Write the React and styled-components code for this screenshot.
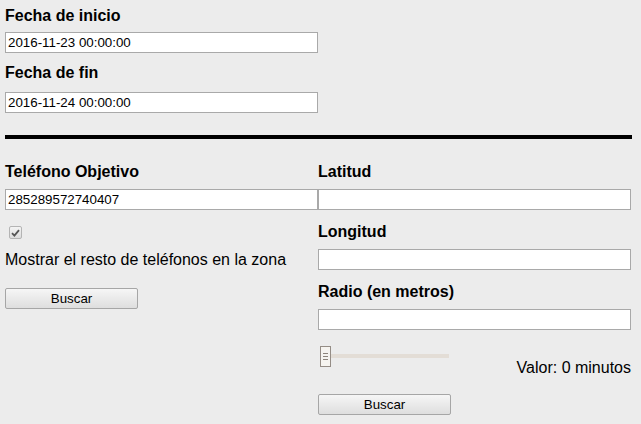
import React, { useState } from "react";
import styled, { createGlobalStyle } from "styled-components";

const GlobalStyle = createGlobalStyle`
  html, body {
    margin: 0;
    padding: 0;
    background: #ececec;
  }
  body {
    font-family: "Liberation Sans", Arial, sans-serif;
    color: #000;
  }
`;

const Page = styled.div`
  width: 626px;
  padding: 6px 0 0 5px;
`;

const Top = styled.div`
  width: 313px;
`;

const Label = styled.div`
  font-weight: bold;
  font-size: 16px;
  line-height: 20px;
  height: 20px;
  margin-top: ${p => p.$top || 0}px;
  margin-bottom: ${p => p.$gap || 7}px;
  white-space: nowrap;
`;

const Input = styled.input`
  display: block;
  box-sizing: border-box;
  width: 100%;
  height: 21px;
  margin: 0;
  padding: 1px 2px;
  border: 1px solid #a9a9a9;
  background: #fff;
  font-family: "Liberation Sans", Arial, sans-serif;
  font-size: 13.33px;
  color: #000;
  outline: none;
`;

const Rule = styled.div`
  height: 4px;
  background: #000;
  width: 627px;
  margin: 22px 0 23px;
`;

const Columns = styled.div`
  display: grid;
  grid-template-columns: 313px 313px;
`;

const Column = styled.div`
  display: flex;
  flex-direction: column;
`;

const Check = styled.span`
  box-sizing: border-box;
  display: flex;
  align-items: center;
  justify-content: center;
  width: 13px;
  height: 13px;
  margin: 16px 0 0 4px;
  border: 1px solid #b4b4b4;
  border-radius: 2px;
  background: linear-gradient(#f4f4f4, #dcdcdc);
`;

const Text = styled.div`
  font-size: 16px;
  line-height: 20px;
  white-space: nowrap;
  margin-top: ${p => p.$top || 0}px;
`;

const Button = styled.button`
  box-sizing: border-box;
  width: 133px;
  height: 21px;
  margin: ${p => p.$top}px 0 0 0;
  padding: 0;
  border: 1px solid #a6a6a6;
  border-radius: 2px;
  background: linear-gradient(#f6f6f6, #dedede);
  font-family: "Liberation Sans", Arial, sans-serif;
  font-size: 13.33px;
  color: #000;
  align-self: flex-start;
`;

const SliderRow = styled.div`
  display: flex;
  justify-content: space-between;
  align-items: flex-start;
  margin-top: 16px;
  height: 32px;
`;

const Track = styled.div`
  position: relative;
  width: 123px;
  height: 4px;
  margin: 8px 0 0 8px;
  background: #e3ddd6;
`;

const Handle = styled.span`
  position: absolute;
  left: -6px;
  top: -8px;
  box-sizing: border-box;
  width: 11px;
  height: 21px;
  border: 1px solid #958d86;
  background: #f6f4f0;
  display: flex;
  flex-direction: column;
  align-items: center;
  justify-content: center;
  gap: 2px;
`;

const Grip = styled.i`
  display: block;
  width: 5px;
  height: 1px;
  background: #8c847c;
`;

export default function App() {
  const [valor] = useState(0);
  return (
    <>
      <GlobalStyle />
      <Page>
        <Top>
          <Label $gap={6}>Fecha de inicio</Label>
          <Input defaultValue="2016-11-23 00:00:00" />
          <Label $top={10} $gap={9}>Fecha de fin</Label>
          <Input defaultValue="2016-11-24 00:00:00" />
        </Top>
        <Rule />
        <Columns>
          <Column>
            <Label>Teléfono Objetivo</Label>
            <Input defaultValue="285289572740407" />
            <Check>
              <svg width="9" height="8" viewBox="0 0 9 8">
                <path d="M1 4.2 L3.4 6.6 L8 1.2" fill="none" stroke="#555" strokeWidth="1.8" />
              </svg>
            </Check>
            <Text $top={11}>Mostrar el resto de teléfonos en la zona</Text>
            <Button $top={18}>Buscar</Button>
          </Column>
          <Column>
            <Label>Latitud</Label>
            <Input />
            <Label $top={12}>Longitud</Label>
            <Input />
            <Label $top={12}>Radio (en metros)</Label>
            <Input />
            <SliderRow>
              <Track>
                <Handle>
                  <Grip />
                  <Grip />
                  <Grip />
                </Handle>
              </Track>
              <Text $top={12}>Valor: {valor} minutos</Text>
            </SliderRow>
            <Button $top={16}>Buscar</Button>
          </Column>
        </Columns>
      </Page>
    </>
  );
}
